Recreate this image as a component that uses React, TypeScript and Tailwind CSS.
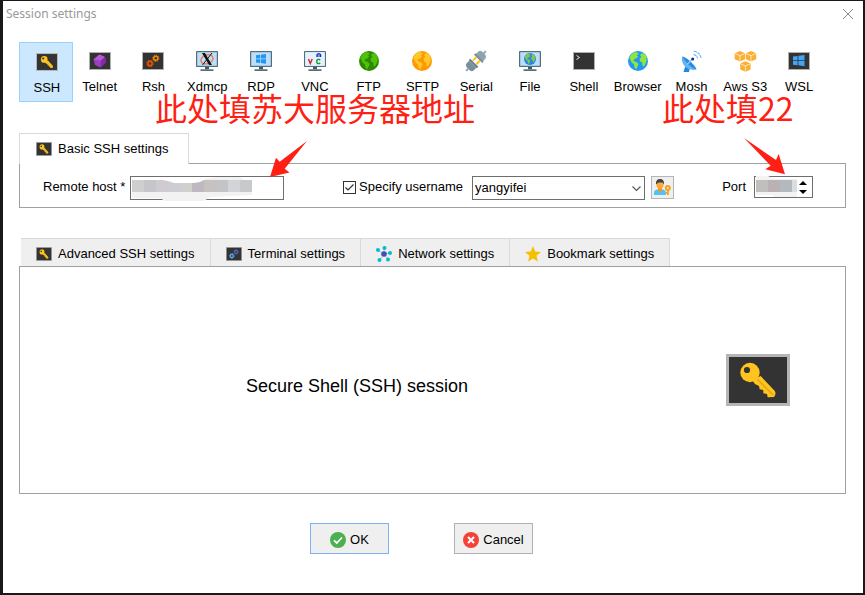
import { useState } from "react";
import type { ReactNode } from "react";

type IconProps = { className?: string };

// Key on a dark terminal tile, used small in the toolbar and large in the panel
function KeyTile({ className }: IconProps) {
    return (
        <svg viewBox="0 0 64 52" preserveAspectRatio="none" className={className} aria-hidden="true">
            <rect width="64" height="52" fill="#b5b5b5" />
            <rect x="3" y="3" width="58" height="46" fill="#333" />
            <path d="M34.7 22 L48.8 37 Q50.5 40 48 43 L41.7 43.3 L41 40 L37.3 39.3 L37.3 36 L33.7 35.3 L33 32 L29 30 L26 26 Z" fill="#ffc41f" />
            <path d="M31.3 25.3 L47.5 41.3" stroke="#e3a812" strokeWidth="1.6" />
            <circle cx="24" cy="18.5" r="9.7" fill="#ffc41f" />
            <circle cx="21" cy="16" r="3.1" fill="#333" />
        </svg>
    );
}

function Tile({ children, className = "h-[18px] w-[22px]" }: { children: ReactNode; className?: string }) {
    return (
        <svg viewBox="0 0 22 18" preserveAspectRatio="none" className={className} aria-hidden="true">
            <rect width="22" height="18" fill="#b0b0b0" />
            <rect x="1" y="1" width="20" height="16" fill="#333" />
            {children}
        </svg>
    );
}

function Gears({ front, back }: { front: string; back: string }) {
    return (
        <g fill="none">
            <circle cx="8" cy="11.5" r="2.1" stroke={front} strokeWidth="1.6" />
            <circle cx="8" cy="11.5" r="3.2" stroke={front} strokeWidth="1.1" strokeDasharray="1.4 1.1" />
            <circle cx="13.8" cy="6.3" r="2" stroke={back} strokeWidth="1.4" />
            <circle cx="13.8" cy="6.3" r="3.1" stroke={back} strokeWidth="1" strokeDasharray="1.3 1.1" />
        </g>
    );
}

function Monitor({ children }: { children: ReactNode }) {
    return (
        <svg viewBox="0 0 22 20" className="h-5 w-[22px]" aria-hidden="true">
            <rect width="22" height="16" rx="0.8" fill="#546e7a" />
            <rect x="1.2" y="1.2" width="19.6" height="13.6" fill="#bbdefb" />
            <path d="M9 16h4v2.3h-4z" fill="#455a64" />
            <path d="M4.5 18.3h13V20h-13z" fill="#546e7a" />
            {children}
        </svg>
    );
}

function WindowsMark({ x, y, color }: { x: number; y: number; color: string }) {
    return (
        <g transform={`translate(${x} ${y})`} fill={color}>
            <path d="M0 1.3 4 .8V4.5H0zM4.7.7 10 0v4.5H4.7zM0 5.2h4v3.7l-4-.5zM4.7 5.2H10v4.6L4.7 9z" />
        </g>
    );
}

function GlobeShape({ sea, land }: { sea: string; land: string }) {
    return (
        <g>
            <circle cx="10" cy="10" r="10" fill={sea} />
            <path d="M1.2 6.5 Q3 2.8 6.5 1 L9.5 1.4 L10.8 3 L8.8 4.2 L10.2 5.6 L8.2 7.6 L6.4 8 L5.5 10 L8.5 11 L10.6 13 L9.5 15.8 L8 18.6 L6.5 16.5 L6 13.5 L3.6 11.5 L2.4 9 Z" fill={land} />
            <path d="M13 2.6 L15.6 2.2 Q18.6 4.4 19.4 7.4 L17.8 7 L18.9 9.3 L17.6 12.3 L16 15.6 L14.4 14.6 L14.2 11.4 L12 10.4 L11.6 7.8 L13.4 6 L12.2 4.8 Z" fill={land} />
        </g>
    );
}

function Globe({ sea, land }: { sea: string; land: string }) {
    return (
        <svg viewBox="0 0 20 20" className="size-5" aria-hidden="true">
            <GlobeShape sea={sea} land={land} />
        </svg>
    );
}

function TelnetIcon() {
    return (
        <Tile>
            <path d="M10.5 2.5 16 5 17 10 11.5 15.5 6 13 4.5 7.5z" fill="#9c3fc0" />
            <path d="M10.5 2.5 16 5 12 8.5 4.5 7.5z" fill="#b65ad4" />
            <path d="M12 8.5 16 5 17 10 11.5 15.5z" fill="#8428a8" />
        </Tile>
    );
}

function XdmcpIcon() {
    return (
        <Monitor>
            <ellipse cx="11" cy="8.3" rx="6.2" ry="4.4" fill="none" stroke="#f4703a" strokeWidth="1.2" transform="rotate(-20 11 8.3)" />
            <path d="M6 2h3l7 12h-3z" fill="#111" />
            <path d="M16 2 6.5 14" stroke="#111" strokeWidth="1" />
        </Monitor>
    );
}

function VncIcon() {
    return (
        <Monitor>
            <rect x="1.2" y="1.2" width="19.6" height="13.6" fill="#e3f2fd" />
            <g fill="none" strokeWidth="1.4">
                <path d="M4.5 8 6.3 12.5 8.2 8" stroke="#e01b24" />
                <path d="M13 6V3.8l1-1h1.6l1 1V6M13 5h3.6" stroke="#1a1acc" strokeWidth="1.2" />
                <path d="M16.2 9.2l-.8-.8h-1.6l-1 1v2.2l1 1h1.6l.8-.8" stroke="#1b9a3c" />
            </g>
        </Monitor>
    );
}

function SerialIcon() {
    return (
        <svg viewBox="0 0 22 22" className="size-[22px]" aria-hidden="true">
            <g transform="rotate(45 11 11)">
                <path d="M10-3h2v5h-2z" fill="#90a4ae" />
                <path d="M6 7.500V3Q6 .5 8.500 0h5Q16 .5 16 3v4.500z" fill="#90a4ae" />
                <path d="M5.200 6h11.600v2H5.200z" fill="#78909c" />
                <path d="M7.500 8h2v5h-2zM12.500 8h2v5h-2z" fill="#ffc107" />
                <path d="M5.200 13.500h11.600v2H5.200z" fill="#607d8b" />
                <path d="M6 15.500h10V19q0 2.500-2.500 3h-5Q6 21.500 6 19z" fill="#78909c" />
                <path d="M10 22h2v3h-2z" fill="#90a4ae" />
            </g>
        </svg>
    );
}

function MoshIcon() {
    return (
        <svg viewBox="0 0 22 22" className="size-[22px]" aria-hidden="true">
            <path d="M3.5 22 5 17h5l-1 5z" fill="#1e88e5" />
            <path d="M2 6.5Q1 13 5.5 17T16.5 19.5z" fill="#64b5f6" />
            <path d="M2 6.5Q6 7 11 12t5.5 7.500Q9 17.500 2 6.500z" fill="#2f8be0" />
            <path d="M7 14.5 12.5 9" stroke="#90caf9" strokeWidth="1.2" />
            <circle cx="12.7" cy="9" r="1.5" fill="#0d2f7e" />
            <g fill="none" stroke="#64b5f6" strokeWidth="1.1" strokeDasharray="3 .8">
                <path d="M13.5 4.5Q17 5 17.5 8.5" />
                <path d="M13.8 1.2Q20 2 21 8" />
            </g>
        </svg>
    );
}

function Cube({ x, y }: { x: number; y: number }) {
    return (
        <g transform={`translate(${x} ${y})`}>
            <path d="M5.2 0 10.4 2.2v6L5.2 10.6 0 8.2v-6z" fill="#fbb034" />
            <path d="M0 2.4 5.2 4.7l5.2-2.3M5.2 4.7v5.9" fill="none" stroke="#fff3dc" strokeWidth=".8" />
        </g>
    );
}

function AwsIcon() {
    return (
        <svg viewBox="0 0 23 21" className="h-[21px] w-[23px]" aria-hidden="true">
            <Cube x={0.7} y={0} />
            <Cube x={11.8} y={0} />
            <Cube x={6.2} y={10.2} />
        </svg>
    );
}

function NetworkIcon() {
    return (
        <svg viewBox="0 0 16 16" className="size-4" aria-hidden="true">
            <path d="M8 8V2M8 8 2 4M8 8l6-1M8 8l-4 6M8 8l4 5" stroke="#b3c5d9" strokeWidth="1" />
            <circle cx="8" cy="8" r="2.8" fill="#3f51b5" />
            <g fill="#00bcd4">
                <circle cx="8.5" cy="2" r="2" />
                <circle cx="2" cy="4" r="2" />
                <circle cx="14" cy="7" r="2" />
                <circle cx="3.5" cy="14" r="2" />
                <circle cx="12" cy="13.5" r="2" />
            </g>
        </svg>
    );
}

function StarIcon() {
    return (
        <svg viewBox="0 0 16 16" className="size-4" aria-hidden="true">
            <path d="M8 0 10.2 5.6 16 6 11.5 9.7 13 15.6 8 12.4 3 15.6 4.5 9.7 0 6 5.8 5.6z" fill="#f5c000" />
        </svg>
    );
}

function UserKeyIcon() {
    return (
        <svg viewBox="0 0 17 16" className="h-4 w-[17px]" aria-hidden="true">
            <path d="M0 16v-2Q0 11 4 10.3h4Q12 11 12 14v2z" fill="#4fc3f7" />
            <path d="M4 9h4v2.5L6 13l-2-1.5z" fill="#ff9800" />
            <circle cx="6" cy="6" r="3.6" fill="#ffa93f" />
            <path d="M2 5.500Q1.500 0 6 0t4 5.500L8.500 3.500h-4z" fill="#424242" />
            <circle cx="13.8" cy="9" r="2" fill="none" stroke="#f9a01b" strokeWidth="2" />
            <path d="M13 11h1.8v5H13zM11.800 13H13v1.500h-1.200z" fill="#f9a01b" />
        </svg>
    );
}

const SESSION_TYPES: { label: string; icon: ReactNode }[] = [
    { label: "SSH", icon: <KeyTile className="h-[18px] w-[22px]" /> },
    { label: "Telnet", icon: <TelnetIcon /> },
    { label: "Rsh", icon: <Tile><Gears front="#e65100" back="#fb8c00" /></Tile> },
    { label: "Xdmcp", icon: <XdmcpIcon /> },
    { label: "RDP", icon: <Monitor><WindowsMark x={6} y={3} color="#2196f3" /></Monitor> },
    { label: "VNC", icon: <VncIcon /> },
    { label: "FTP", icon: <Globe sea="#2d8a00" land="#4fc20a" /> },
    { label: "SFTP", icon: <Globe sea="#ff9800" land="#ffc928" /> },
    { label: "Serial", icon: <SerialIcon /> },
    {
        label: "File",
        icon: (
            <Monitor>
                <g transform="translate(5 2) scale(.6)">
                    <GlobeShape sea="#1e88e5" land="#8bc34a" />
                </g>
            </Monitor>
        ),
    },
    { label: "Shell", icon: <Tile><path d="M3.5 3.500 6.500 5.500 3.500 7.500" fill="none" stroke="#e8e8e8" strokeWidth="1" /></Tile> },
    { label: "Browser", icon: <Globe sea="#2196f3" land="#8ee53f" /> },
    { label: "Mosh", icon: <MoshIcon /> },
    { label: "Aws S3", icon: <AwsIcon /> },
    { label: "WSL", icon: <Tile><g transform="translate(5 3) scale(1.15)"><WindowsMark x={0} y={0} color="#42a5f5" /></g></Tile> },
];

const SETTINGS_TABS: { label: string; icon: ReactNode }[] = [
    { label: "Advanced SSH settings", icon: <KeyTile className="h-3.5 w-4" /> },
    { label: "Terminal settings", icon: <Tile className="h-3.5 w-4"><Gears front="#5aaef0" back="#5c6bd0" /></Tile> },
    { label: "Network settings", icon: <NetworkIcon /> },
    { label: "Bookmark settings", icon: <StarIcon /> },
];

// Slivers of the terminal behind the dialog, visible on its left border
const EDGE_MARKS = [
    { y: 12, h: 5, color: "#2c4a5a" },
    { y: 42, h: 5, color: "#2c4a5a" },
    { y: 56, h: 1, color: "#d0d0d0" },
    { y: 85, h: 6, color: "#35505c" },
    { y: 116, h: 6, color: "#2c5070" },
    { y: 123, h: 1, color: "#d0d0d0" },
    { y: 132, h: 3, color: "#2c5a7a" },
    { y: 137, h: 1, color: "#c8c8c8" },
    { y: 146, h: 4, color: "#2c5a7a" },
    { y: 152, h: 1, color: "#d0d0d0" },
    { y: 171, h: 3, color: "#a8a8a8" },
    { y: 176, h: 1, color: "#d0d0d0" },
    { y: 178, h: 1, color: "#d0d0d0" },
    { y: 182, h: 1, color: "#d0d0d0" },
    { y: 235, h: 1, color: "#707070" },
    { y: 262, h: 2, color: "#c8c8c8" },
    { y: 265, h: 1, color: "#9ac0e0" },
    { y: 267, h: 3, color: "#b8b8b8" },
    { y: 277, h: 1, color: "#d0d0d0" },
    { y: 280, h: 4, color: "#a09080" },
    { y: 288, h: 1, color: "#d0d0d0" },
    { y: 312, h: 4, color: "#2c5a7a" },
    { y: 345, h: 2, color: "#1c4060" },
];

const HOST_MOSAIC = ["#d0cfd0", "#c6c5c9", "#cfcbd0", "#cdcdd3", "#d2d0cc", "#beb8c1", "#c6c2c2", "#c3c3c8", "#d2d4d8", "#c8c9cb"];

// Smudge that hides the host name
function HostMosaic() {
    return (
        <svg viewBox="0 0 130 28" className="pointer-events-none absolute top-0 left-0.5 h-7 w-[130px]" aria-hidden="true">
            <path d="M0 16h120v3l-20 1-22 1-6 4H32l-3-3H0z" fill="#f2f2f2" />
            <path d="M72 3 84 1h24l4 3v14H72z" fill="#f2f2f2" />
            {HOST_MOSAIC.map((color, i) => (
                <rect key={i} x={i * 12} y="4" width="12" height="12" fill={color} />
            ))}
            <path d="M30 4h42l-4 2-6 1H42l-6-2z" fill="#fff" />
        </svg>
    );
}

function PortMosaic() {
    return (
        <svg viewBox="0 0 44 22" className="pointer-events-none absolute -top-px left-0 h-[22px] w-11" aria-hidden="true">
            <path d="M1 0h12l7 3h22v18H20l-3-2H1z" fill="#f3f3f3" />
            <rect x="1" y="4" width="12" height="12" fill="#c1bfbe" />
            <rect x="13" y="4" width="12" height="12" fill="#bab1b5" />
            <rect x="25" y="4" width="12" height="12" fill="#b3b9be" />
            <rect x="37" y="4" width="5" height="12" fill="#dcdde0" />
        </svg>
    );
}

export default function App() {
    const [session, setSession] = useState("SSH");
    const [withUser, setWithUser] = useState(true);
    const [port, setPort] = useState("");

    const stepPort = (by: number) => setPort(String(Math.max(0, Number(port) + by)));

    return (
        <main className="relative flex min-h-screen flex-col overflow-hidden border-t border-r-2 border-b-2 border-l-3 border-[#19191b] bg-white font-['Liberation_Sans',Arial,sans-serif] text-[13px] leading-4 text-black">
            {/* Title bar */}
            <header className="flex h-[25px] items-center justify-between pr-[9px] pl-[3px]">
                <h1 className="font-['Noto_Sans','Open_Sans',sans-serif] text-[12px] text-[#999]">Session settings</h1>
                <button type="button" aria-label="Close">
                    <svg viewBox="0 0 12 12" className="size-3" aria-hidden="true">
                        <path d="M1 1 11 11M11 1 1 11" stroke="#8a8a8a" strokeWidth="1" />
                    </svg>
                </button>
            </header>

            {/* Session types */}
            <nav className="mt-4 mr-[37px] ml-4 grid grid-cols-15">
                {SESSION_TYPES.map(({ label, icon }) => (
                    <button
                        key={label}
                        type="button"
                        onClick={() => setSession(label)}
                        className={`flex h-[60px] flex-col items-center gap-[7px] border whitespace-nowrap ${
                            session === label ? "border-[#99d1ff] bg-[#cce8ff] pt-2 pl-0.5" : "border-transparent pt-[7px]"
                        }`}
                    >
                        <span className="flex h-[22px] items-center">{icon}</span>
                        {label}
                    </button>
                ))}
            </nav>

            {/* Basic settings */}
            <section className="mt-[31px] mr-[17px] ml-4">
                <h2 className="relative z-10 -mb-px flex h-[31px] w-[170px] items-center gap-1.5 border border-b-0 border-[#d9d9d9] bg-white pl-4">
                    <KeyTile className="h-3.5 w-4" />
                    Basic SSH settings
                </h2>
                <div className="flex h-[45px] items-center border border-[#a0a0a0] pt-[3px] pr-8 pl-[23px]">
                    <label htmlFor="host" className="w-[87px] shrink-0">Remote host *</label>
                    <div className="relative mt-0.5">
                        <input id="host" type="text" className="block h-6 w-[154px] border border-[#6e6e6e] bg-white px-1 outline-none" />
                        <HostMosaic />
                    </div>

                    <label className="ml-[59px] flex items-center gap-[3px] whitespace-nowrap">
                        <span className="relative size-[13px]">
                            <input
                                type="checkbox"
                                checked={withUser}
                                onChange={(e) => setWithUser(e.target.checked)}
                                className="block size-[13px] appearance-none border border-[#333] bg-white"
                            />
                            {withUser && (
                                <svg viewBox="0 0 13 13" className="pointer-events-none absolute inset-0 size-[13px]" aria-hidden="true">
                                    <path d="M2.5 6.5 5 9 10.5 3.5" fill="none" stroke="#333" strokeWidth="1.2" />
                                </svg>
                            )}
                        </span>
                        Specify username
                    </label>
                    <div className="relative mt-0.5 ml-[9px]">
                        <select aria-label="Username" disabled={!withUser} className="block h-6 w-[173px] appearance-none border border-[#6e6e6e] bg-white pl-0.5 outline-none">
                            <option>yangyifei</option>
                        </select>
                        <svg viewBox="0 0 9 6" className="pointer-events-none absolute top-[10px] right-1 h-1.5 w-[9px]" aria-hidden="true">
                            <path d="M.5.5 4.5 4.5 8.5.5" fill="none" stroke="#555" strokeWidth="1.1" />
                        </svg>
                    </div>
                    <button type="button" aria-label="Manage users" className="ml-1.5 flex size-[23px] items-center justify-center border border-[#b5b5b5] bg-[#efefef]">
                        <UserKeyIcon />
                    </button>

                    <label htmlFor="port" className="mr-2 ml-auto">Port</label>
                    <div className="relative flex h-[22px] w-[59px] border border-[#6e6e6e]">
                        <input
                            id="port"
                            type="text"
                            inputMode="numeric"
                            value={port}
                            onChange={(e) => setPort(e.target.value)}
                            className="w-11 px-1 outline-none"
                        />
                        <PortMosaic />
                        <div className="flex flex-col items-center justify-center gap-[5px]">
                            <button type="button" aria-label="Increase port" onClick={() => stepPort(1)}>
                                <svg viewBox="0 0 8 4" className="block h-1 w-2"><path d="M0 4 4 0l4 4z" /></svg>
                            </button>
                            <button type="button" aria-label="Decrease port" onClick={() => stepPort(-1)}>
                                <svg viewBox="0 0 8 4" className="block h-1 w-2"><path d="M0 0h8L4 4z" /></svg>
                            </button>
                        </div>
                    </div>
                </div>
            </section>

            {/* Other settings */}
            <section className="mt-[30px] mr-[17px] ml-4 flex flex-1 flex-col">
                <div className="ml-0.5 flex">
                    {SETTINGS_TABS.map(({ label, icon }) => (
                        <button key={label} type="button" className="flex h-7 items-center gap-1.5 border-t border-r border-[#d9d9d9] bg-[#efefef] pt-0.5 pr-[15px] pl-[15px] whitespace-nowrap">
                            {icon}
                            {label}
                        </button>
                    ))}
                </div>
                <div className="flex min-h-[228px] flex-1 items-center border border-[#a0a0a0] pr-[55px]">
                    <p className="flex-1 pt-3 pr-8 text-center text-[18px] leading-6">Secure Shell (SSH) session</p>
                    <KeyTile className="h-[52px] w-16" />
                </div>
            </section>

            {/* Dialog buttons */}
            <footer className="mt-[29px] mb-[39px] flex justify-center gap-[65px] pr-[23px]">
                <button type="button" className="flex h-[31px] w-[79px] items-center justify-center gap-1 border border-[#7fb2f5] bg-[#efefef] pt-0.5">
                    <svg viewBox="0 0 16 16" className="size-4" aria-hidden="true">
                        <circle cx="8" cy="8" r="8" fill="#4caf50" />
                        <path d="M4 8.3 6.8 11 12 5.5" fill="none" stroke="#fff" strokeWidth="1.8" />
                    </svg>
                    OK
                </button>
                <button type="button" className="flex h-[31px] w-[79px] items-center justify-center gap-1 border border-[#b0b0b0] bg-[#efefef] pt-0.5">
                    <svg viewBox="0 0 16 16" className="size-4" aria-hidden="true">
                        <circle cx="8" cy="8" r="8" fill="#f44336" />
                        <path d="M5 5l6 6M11 5l-6 6" stroke="#fff" strokeWidth="2" />
                    </svg>
                    Cancel
                </button>
            </footer>

            {/* Red notes drawn over the dialog */}
            <p className="pointer-events-none absolute top-[90px] left-[152px] z-20 font-['Noto_Sans_CJK_SC',sans-serif] text-[32px] leading-8 whitespace-nowrap text-[#ff1f14]">此处填苏大服务器地址</p>
            <p className="pointer-events-none absolute top-[90px] left-[659px] z-20 font-['Noto_Sans_CJK_SC',sans-serif] text-[32px] leading-8 whitespace-nowrap text-[#ff1f14]">此处填22</p>
            <svg viewBox="0 0 38 37" className="pointer-events-none absolute top-[140px] left-[267px] z-20 h-[37px] w-[38px]" aria-hidden="true">
                <path d="M37 0 9.7 20.7 6 16.7 0 36 19.5 31.5 14.7 27.7z" fill="#ff1f14" />
            </svg>
            <svg viewBox="0 0 42 37" className="pointer-events-none absolute top-[137px] left-[741px] z-20 h-[37px] w-[42px]" aria-hidden="true">
                <path d="M0 0 32 22 34.7 16 41 36.3 21.3 31.3 26.7 27.7z" fill="#ff1f14" />
            </svg>

            <svg className="pointer-events-none absolute -top-px -left-[3px] h-[360px] w-[3px]" aria-hidden="true">
                {EDGE_MARKS.map((m) => (
                    <rect key={m.y} x="0" y={m.y} width="2" height={m.h} fill={m.color} />
                ))}
            </svg>
        </main>
    );
}
